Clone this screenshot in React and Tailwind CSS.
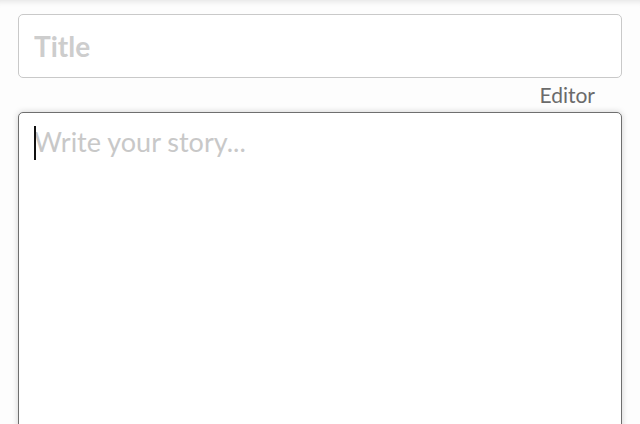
export default function App() {
  return (
    <div
      className="h-[424px] overflow-hidden bg-[#fdfdfd] px-[18px] pt-[14px] shadow-[inset_0_7px_6px_-6px_rgba(0,0,0,0.12)]"
      style={{ fontFamily: 'Lato, "Noto Sans", sans-serif' }}
    >
      <input
        type="text"
        placeholder="Title"
        className="block h-[64px] w-full rounded-[5px] border-[1.5px] border-[#c9c9c9] bg-white px-[15px] text-[28px] font-bold text-[#333] outline-none placeholder:text-[#cdcdcd]"
      />
      <div className="flex h-[34px] items-center justify-end pr-[27px] text-[21px] text-[#6b6b6b]">
        Editor
      </div>
      <div className="relative">
        <textarea
          placeholder="Write your story..."
          className="block h-[340px] w-full resize-none rounded-[5px] border-[1.5px] border-[#6f6f6f] bg-white px-[15px] pt-[10px] text-[27px] leading-[38px] text-[#333] shadow-[0_0_6px_rgba(0,0,0,0.18)] outline-none placeholder:text-[#c8c8c8]"
        />
        <span className="absolute left-[16px] top-[14px] h-[34px] w-[1.5px] bg-[#111]" />
      </div>
    </div>
  )
}
